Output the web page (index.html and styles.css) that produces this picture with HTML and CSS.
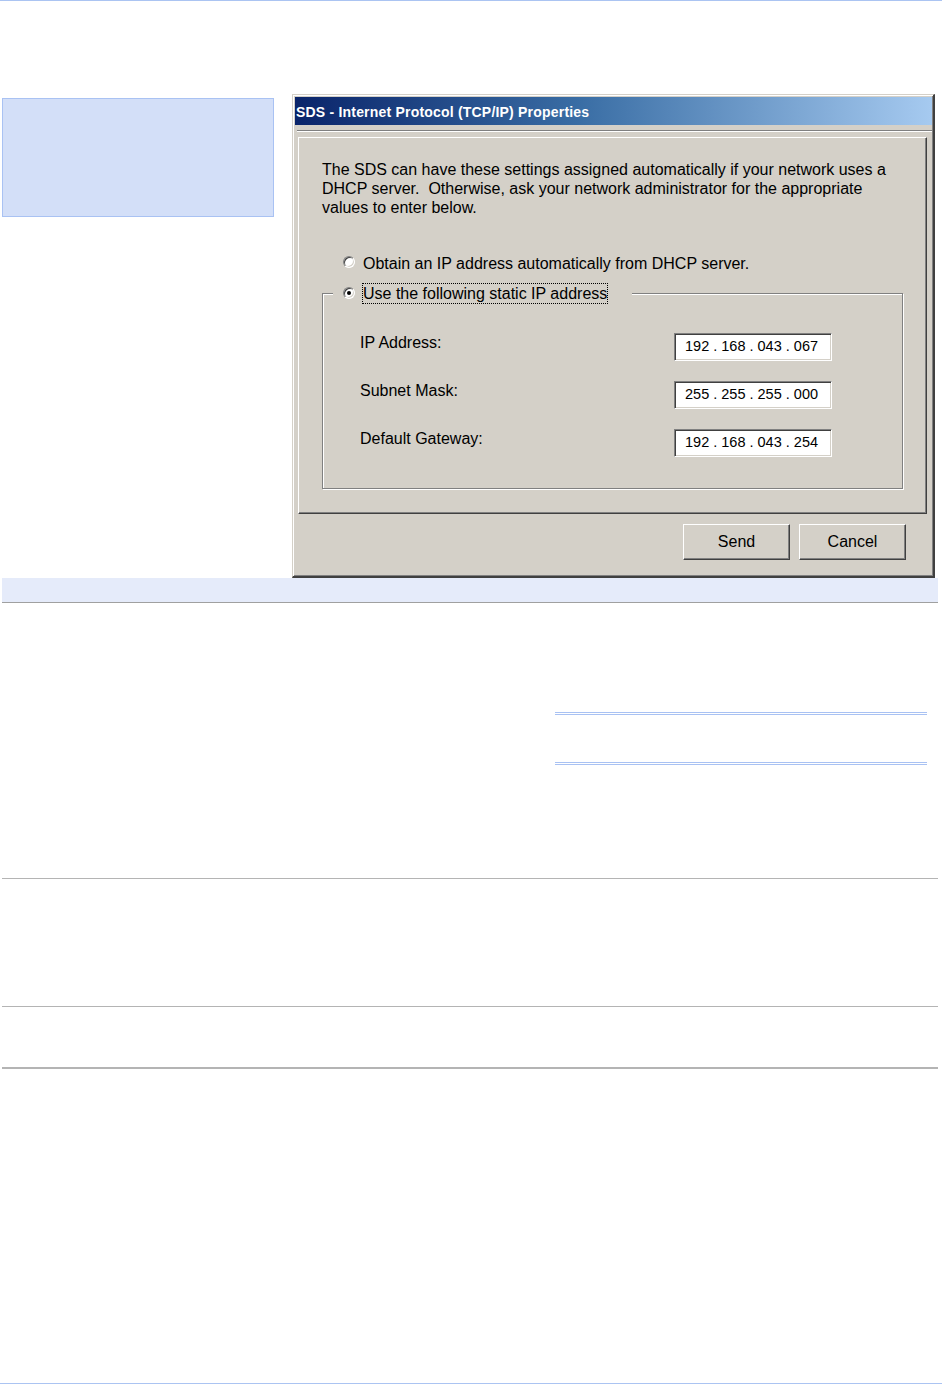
FILE: index.html
```html
<!DOCTYPE html>
<html>
<head>
<meta charset="utf-8">
<link rel="stylesheet" href="styles.css">
</head>
<body>
<div class="topline"></div>
<div class="table">
  <div class="row row-first">
    <div class="note"></div>
    <div class="dialog">
      <div class="titlebar"><span class="title">SDS - Internet Protocol (TCP/IP) Properties</span></div>
      <div class="separator"></div>
      <div class="pane">
        <p class="intro">The SDS can have these settings assigned automatically if your network uses a<br>DHCP server.&nbsp; Otherwise, ask your network administrator for the appropriate<br>values to enter below.</p>
        <div class="radio-row">
          <span class="radio"></span>
          <span class="radio-label">Obtain an IP address automatically from DHCP server.</span>
        </div>
        <fieldset class="group">
          <legend class="legend">
            <span class="radio checked"></span>
            <span class="radio-label focus">Use the following static IP address</span>
          </legend>
          <div class="group-body">
            <div class="field-row">
              <span class="field-label">IP Address:</span>
              <div class="ipfield">192 . 168 . 043 . 067</div>
            </div>
            <div class="field-row">
              <span class="field-label">Subnet Mask:</span>
              <div class="ipfield">255 . 255 . 255 . 000</div>
            </div>
            <div class="field-row">
              <span class="field-label">Default Gateway:</span>
              <div class="ipfield">192 . 168 . 043 . 254</div>
            </div>
          </div>
        </fieldset>
      </div>
      <div class="buttons">
        <button class="btn">Send</button>
        <button class="btn">Cancel</button>
      </div>
    </div>
  </div>
  <div class="row band"></div>
  <div class="row row-rules">
    <div class="rules">
      <div class="rule"></div>
      <div class="rule rule-second"></div>
    </div>
  </div>
  <div class="row row-mid"></div>
  <div class="row row-short"></div>
</div>
<div class="bottom-space"></div>
<div class="bottomline"></div>
</body>
</html>
```

FILE: styles.css
```css
html, body {
  margin: 0;
  padding: 0;
  background: #ffffff;
}

body {
  width: 942px;
  height: 1384px;
  overflow: hidden;
  font-family: "Liberation Sans", Arial, sans-serif;
}

.topline {
  height: 1px;
  background: #abc4f2;
}

.table {
  margin-left: 2px;
  width: 936px;
  margin-top: 93px;
}

.row-first {
  display: flex;
  align-items: flex-start;
}

.note {
  box-sizing: border-box;
  width: 272px;
  height: 119px;
  margin-top: 4px;
  background: #d3dff8;
  border: 1px solid #a9c2f3;
}

/* ---------- dialog ---------- */
.dialog {
  box-sizing: border-box;
  width: 643px;
  height: 484px;
  margin-left: 18px;
  background: #d4d0c8;
  border-style: solid;
  border-width: 1px 2px 2px 1px;
  border-color: #d4d0c8 #404040 #404040 #d4d0c8;
  box-shadow: inset 1px 1px 0 #ffffff, inset -1px -1px 0 #808080;
  padding: 2px 1px 0 2px;
  display: flex;
  flex-direction: column;
  color: #000;
  font-size: 16px;
}

.titlebar {
  height: 28px;
  display: flex;
  align-items: center;
  background: linear-gradient(to right, #0a246a 0%, #3a6ea5 45%, #a6caf0 100%);
  padding-left: 1px;
}

.title {
  color: #ffffff;
  font-weight: bold;
  font-size: 14px;
  letter-spacing: 0.2px;
  white-space: nowrap;
  margin-top: 1px;
}

.separator {
  height: 0;
  margin: 5px 0 5px 2px;
  border-top: 1px solid #808080;
  border-bottom: 1px solid #ffffff;
}

.pane {
  box-sizing: border-box;
  width: 629px;
  height: 377px;
  margin-left: 3px;
  border-style: solid;
  border-width: 1px 1px 1px 1px;
  border-color: #ffffff #404040 #404040 #ffffff;
  box-shadow: inset -1px -1px 0 #808080;
  padding: 22px 0 0 23px;
}

.intro {
  margin: 0;
  line-height: 19px;
  white-space: nowrap;
}

.radio-row {
  display: flex;
  align-items: flex-start;
  margin: 37px 0 0 21px;
  line-height: 19px;
}

.radio {
  position: relative;
  box-sizing: border-box;
  flex: none;
  width: 12px;
  height: 12px;
  margin-top: 2px;
  border-radius: 50%;
  background: #ffffff;
  border: 1px solid;
  border-color: #808080 #ffffff #ffffff #808080;
  box-shadow: inset 1px 1px 0 #404040, inset -1px -1px 0 #d4d0c8;
}

.radio.checked::after {
  content: "";
  position: absolute;
  left: 3px;
  top: 3px;
  width: 4px;
  height: 4px;
  border-radius: 50%;
  background: #000;
}

.radio-label {
  margin-left: 8px;
  white-space: nowrap;
}

/* ---------- group box ---------- */
.group {
  box-sizing: border-box;
  width: 581px;
  margin: 10px 0 0 0;
  padding: 0;
  border: 1px solid #808080;
  box-shadow: inset 1px 1px 0 #ffffff, 1px 1px 0 #ffffff;
  min-width: 0;
}

.legend {
  display: flex;
  align-items: flex-start;
  margin-left: 10px;
  padding: 0 24px 0 10px;
  background: #d4d0c8;
  line-height: 19px;
}

.legend .radio {
  margin-top: 4px;
}

.legend .radio-label {
  margin-left: 7px;
}

.focus {
  border: 1px dotted #000;
}

.group-body {
  padding: 29px 0 31px 37px;
  display: flex;
  flex-direction: column;
  gap: 20px;
}

.field-row {
  display: flex;
  align-items: flex-start;
  line-height: 19px;
}

.field-label {
  width: 314px;
  flex: none;
}

.ipfield {
  box-sizing: border-box;
  width: 158px;
  height: 28px;
  background: #ffffff;
  border: 1px solid;
  border-color: #808080 #ffffff #ffffff #808080;
  box-shadow: inset 1px 1px 0 #404040, inset -1px -1px 0 #d4d0c8;
  padding: 3px 0 0 10px;
  font-size: 14.5px;
  line-height: 19px;
  white-space: nowrap;
}

/* ---------- buttons ---------- */
.buttons {
  display: flex;
  justify-content: flex-end;
  gap: 9px;
  margin-top: 10px;
  padding-right: 26px;
}

.btn {
  box-sizing: border-box;
  width: 107px;
  height: 36px;
  padding: 0;
  background: #d4d0c8;
  border: 1px solid;
  border-color: #ffffff #404040 #404040 #ffffff;
  box-shadow: inset -1px -1px 0 #808080;
  font-family: "Liberation Sans", Arial, sans-serif;
  font-size: 16px;
  color: #000;
}

/* ---------- table rows ---------- */
.band {
  height: 24px;
  background: #e5ebfa;
  border-bottom: 1px solid #a0a0a0;
}

.row-rules {
  box-sizing: border-box;
  height: 276px;
  border-bottom: 1px solid #b4b4b4;
  padding-top: 109px;
}

.rules {
  margin-left: 553px;
  width: 372px;
}

.rule {
  height: 1px;
  border-top: 1px solid #a9c2f3;
  border-bottom: 1px solid #a9c2f3;
}

.rule-second {
  margin-top: 47px;
}

.row-mid {
  box-sizing: border-box;
  height: 128px;
  border-bottom: 1px solid #b4b4b4;
}

.row-short {
  box-sizing: border-box;
  height: 62px;
  border-bottom: 2px solid #b4b4b4;
}

.bottom-space {
  height: 314px;
}

.bottomline {
  height: 1px;
  background: #abc4f2;
}
```
